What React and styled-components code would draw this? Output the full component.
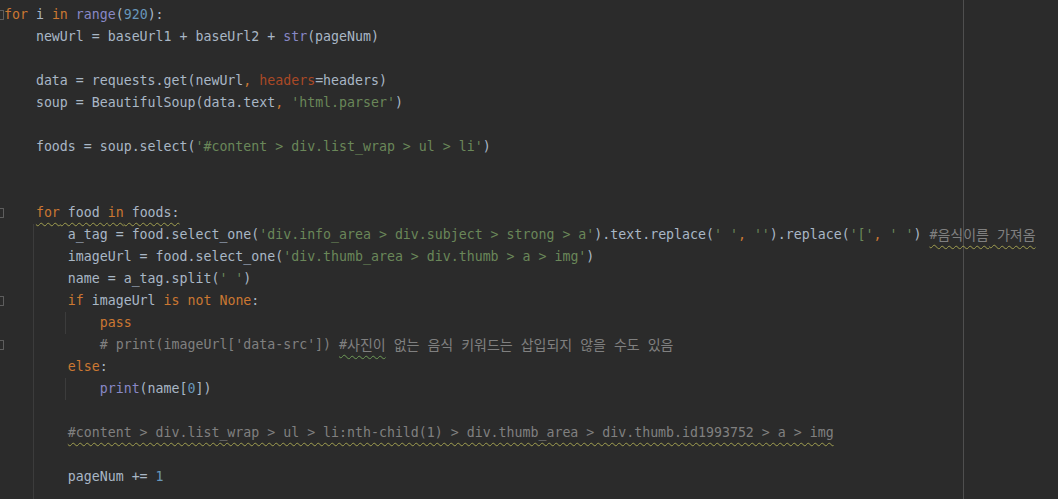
import React from "react";
import styled, { createGlobalStyle } from "styled-components";

const Global = createGlobalStyle`
  html, body {
    margin: 0;
    padding: 0;
    background: #2b2b2b;
    height: 100%;
    overflow: hidden;
  }
  #root {
    height: 100%;
  }
`;

const colors = {
  text: "#a9b7c6",
  kw: "#cc7832",
  str: "#6a8759",
  num: "#6897bb",
  fn: "#8888c6",
  param: "#aa4926",
  cmt: "#808080",
};

const Editor = styled.div`
  position: relative;
  height: 499px;
  overflow: hidden;
  background: #2b2b2b;
  display: flex;
  align-items: flex-start;
  padding-top: 4px;
  box-sizing: border-box;
  font-family: "DejaVu Sans Mono", "Noto Sans CJK KR", monospace;
  font-size: 13.25px;
  color: ${colors.text};
`;

// right margin guide sits over the text area
const MarginGuide = styled.div`
  position: absolute;
  left: 963px;
  top: 0;
  bottom: 0;
  width: 1px;
  background: #4f4f4f;
`;

const Gutter = styled.div`
  width: 4px;
  flex: none;
  display: flex;
  flex-direction: column;
  overflow: hidden;
`;

const GutterCell = styled.div`
  height: 22px;
  flex: none;
  display: flex;
  align-items: center;
`;

const FoldMark = styled.span`
  width: 3px;
  height: 8px;
  border: 1px solid #5e5e5e;
  border-left: none;
  border-radius: 0 1px 1px 0;
`;

const Code = styled.div`
  display: flex;
  flex-direction: column;
  flex: 1;
  position: relative;
  z-index: 1;
`;

const Line = styled.div`
  height: 22px;
  flex: none;
  line-height: 22px;
  display: flex;
  align-items: center;
  white-space: pre;
`;

const Indent = styled.span`
  display: inline-block;
  width: 4ch;
  height: 22px;
  flex: none;
  background: ${(p) =>
    p.$guide
      ? "linear-gradient(to right, transparent calc(100% - 3px), #3c3c3c calc(100% - 3px), #3c3c3c calc(100% - 2px), transparent calc(100% - 2px))"
      : "none"};
`;

const Tok = styled.span`
  color: ${(p) => colors[p.$k || "text"]};
  ${(p) =>
    p.$wave &&
    `
    text-decoration: underline wavy ${p.$wave};
    text-decoration-thickness: 1px;
    text-underline-offset: 5px;
    text-decoration-skip-ink: none;
  `}
`;

const Hangul = styled.span`
  font-size: 14px;
`;

const WARN = "#a19f50";
const TYPO = "#6f9c57";

// [text, kind, wave, korean]
const lines = [
  { fold: true, ind: [], toks: [["for", "kw"], [" i "], ["in", "kw"], [" "], ["range", "fn"], ["("], ["920", "num"], ["):"]] },
  { ind: [0], toks: [["newUrl = baseUrl1 + baseUrl2 + "], ["str", "fn"], ["(pageNum)"]] },
  { ind: [], toks: [] },
  { ind: [0], toks: [["data = requests.get(newUrl"], [",", "kw"], [" "], ["headers", "param"], ["=headers)"]] },
  { ind: [0], toks: [["soup = BeautifulSoup(data.text"], [",", "kw"], [" "], ["'html.parser'", "str"], [")"]] },
  { ind: [], toks: [] },
  { ind: [0], toks: [["foods = soup.select("], ["'#content > div.list_wrap > ul > li'", "str"], [")"]] },
  { ind: [], toks: [] },
  { ind: [], toks: [] },
  {
    fold: true,
    ind: [0],
    toks: [["for", "kw", WARN], [" food ", null, WARN], ["in", "kw", WARN], [" foods:", null, WARN]],
  },
  {
    ind: [1, 0],
    toks: [
      ["a_tag = food.select_one("],
      ["'div.info_area > div.subject > strong > a'", "str"],
      [").text.replace("],
      ["' '", "str"],
      [",", "kw"],
      [" "],
      ["''", "str"],
      [").replace("],
      ["'['", "str"],
      [",", "kw"],
      [" "],
      ["' '", "str"],
      [")"],
      [" "],
      ["#", "cmt", WARN],
      ["음식이름", "cmt", WARN, true],
      [" ", "cmt", WARN],
      ["가져옴", "cmt", WARN, true],
    ],
  },
  { ind: [1, 0], toks: [["imageUrl = food.select_one("], ["'div.thumb_area > div.thumb > a > img'", "str"], [")"]] },
  { ind: [1, 0], toks: [["name = a_tag.split("], ["' '", "str"], [")"]] },
  {
    fold: true,
    ind: [1, 0],
    toks: [["if", "kw"], [" imageUrl "], ["is", "kw"], [" "], ["not", "kw"], [" "], ["None", "kw"], [":"]],
  },
  { ind: [1, 1, 0], toks: [["pass", "kw"]] },
  {
    fold: true,
    ind: [1, 0, 0],
    toks: [
      ["# print(imageUrl['data-src']) ", "cmt"],
      ["#", "cmt", TYPO],
      ["사진이", "cmt", TYPO, true],
      ...["없는", "음식", "키워드는", "삽입되지", "않을", "수도", "있음"].flatMap((w) => [
        [" ", "cmt"],
        [w, "cmt", null, true],
      ]),
    ],
  },
  { ind: [1, 0], toks: [["else", "kw"], [":"]] },
  { ind: [1, 1, 0], toks: [["print", "fn"], ["(name["], ["0", "num"], ["])"]] },
  { ind: [1], toks: [] },
  {
    ind: [1, 0],
    toks: [
      [
        "#content > div.list_wrap > ul > li:nth-child(1) > div.thumb_area > div.thumb.id1993752 > a > img",
        "cmt",
        WARN,
      ],
    ],
  },
  { ind: [1], toks: [] },
  { ind: [1, 0], toks: [["pageNum += "], ["1", "num"]] },
  { ind: [1], toks: [] },
  { ind: [1], toks: [] },
];

const App = () => {
  return (
    <>
      <Global />
      <Editor>
        <MarginGuide />
        <Gutter>
          {lines.map((l, i) => (
            <GutterCell key={i}>{l.fold ? <FoldMark /> : null}</GutterCell>
          ))}
        </Gutter>
        <Code>
          {lines.map((l, i) => (
            <Line key={i}>
              {l.ind.map((g, j) => (
                <Indent key={j} $guide={g === 1} />
              ))}
              {l.toks.map(([t, k, w, ko], j) => (
                <Tok key={j} $k={k} $wave={w}>
                  {ko ? <Hangul>{t}</Hangul> : t}
                </Tok>
              ))}
            </Line>
          ))}
        </Code>
      </Editor>
    </>
  );
};

export default App;
